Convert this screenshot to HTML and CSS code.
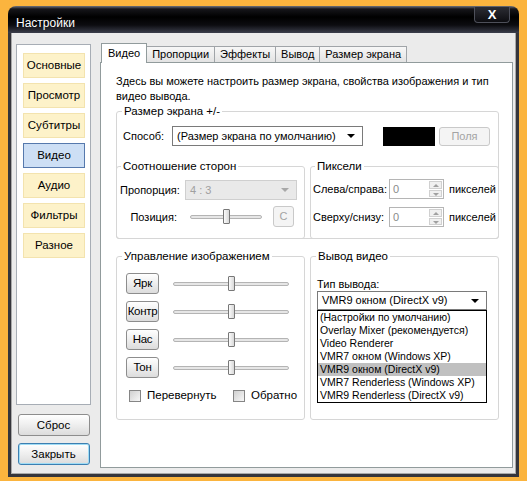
FILE: index.html
```html
<!doctype html>
<html lang="ru">
<head>
    <meta charset="UTF-8">
    <title>Настройки</title>
    <link rel="stylesheet" href="styles.css">
</head>
<body>
<div class="window">
    <div class="titlebar">
        <span class="title">Настройки</span>
        <div class="close">X</div>
    </div>
    <div class="client">
        <!-- левая колонка со страницами -->
        <div class="side">
            <div class="pages">
                <div class="page">Основные</div>
                <div class="page">Просмотр</div>
                <div class="page">Субтитры</div>
                <div class="page cur">Видео</div>
                <div class="page">Аудио</div>
                <div class="page">Фильтры</div>
                <div class="page">Разное</div>
            </div>
            <div class="btn side_btn">Сброс</div>
            <div class="btn side_btn focus">Закрыть</div>
        </div>

        <!-- вкладки -->
        <div class="tabs">
            <ul class="tab_head">
                <li class="cur">Видео</li>
                <li>Пропорции</li>
                <li>Эффекты</li>
                <li>Вывод</li>
                <li>Размер экрана</li>
            </ul>
            <div class="tab_body">
                <p class="intro">Здесь вы можете настроить размер экрана, свойства изображения и тип видео вывода.</p>

                <fieldset class="group">
                    <legend>Размер экрана +/-</legend>
                    <div class="row size_row">
                        <span class="lbl size_lbl">Способ:</span>
                        <div class="select size_sel">(Размер экрана по умолчанию)<i class="arrow"></i></div>
                        <div class="color_box"></div>
                        <div class="btn off fields_btn">Поля</div>
                    </div>
                    <div class="sub_row">
                        <fieldset class="group sub">
                            <legend>Соотношение сторон</legend>
                            <div class="row ratio_row">
                                <span class="lbl ratio_lbl">Пропорция:</span>
                                <div class="select off ratio_sel">4 : 3<i class="arrow"></i></div>
                            </div>
                            <div class="row pos_row">
                                <span class="lbl pos_lbl">Позиция:</span>
                                <div class="slider short">
                                    <div class="track"></div>
                                    <b class="thumb" style="left:33px"></b>
                                </div>
                                <div class="btn off c_btn">C</div>
                            </div>
                        </fieldset>
                        <fieldset class="group sub">
                            <legend>Пиксели</legend>
                            <div class="row pix_row first">
                                <span class="lbl pix_lbl">Слева/справа:</span>
                                <div class="spin"><span>0</span><div class="spin_btns"><i class="up"></i><i class="down"></i></div></div>
                                <span class="unit">пикселей</span>
                            </div>
                            <div class="row pix_row">
                                <span class="lbl pix_lbl">Сверху/снизу:</span>
                                <div class="spin"><span>0</span><div class="spin_btns"><i class="up"></i><i class="down"></i></div></div>
                                <span class="unit">пикселей</span>
                            </div>
                        </fieldset>
                    </div>
                </fieldset>

                <div class="low_row">
                    <fieldset class="group image_group">
                        <legend>Управление изображением</legend>
                        <div class="adjust">
                            <div class="row">
                                <div class="btn adj_btn">Ярк</div>
                                <div class="slider long"><div class="track"></div><b class="thumb" style="left:55px"></b></div>
                            </div>
                            <div class="row">
                                <div class="btn adj_btn">Контр</div>
                                <div class="slider long"><div class="track"></div><b class="thumb" style="left:55px"></b></div>
                            </div>
                            <div class="row">
                                <div class="btn adj_btn">Нас</div>
                                <div class="slider long"><div class="track"></div><b class="thumb" style="left:55px"></b></div>
                            </div>
                            <div class="row">
                                <div class="btn adj_btn">Тон</div>
                                <div class="slider long"><div class="track"></div><b class="thumb" style="left:55px"></b></div>
                            </div>
                        </div>
                        <div class="checks">
                            <label class="check flip"><i class="box"></i>Перевернуть</label>
                            <label class="check"><i class="box"></i>Обратно</label>
                        </div>
                    </fieldset>

                    <fieldset class="group out_group">
                        <legend>Вывод видео</legend>
                        <div class="out_box">
                            <div class="out_lbl">Тип вывода:</div>
                            <div class="select out_sel">VMR9 окном (DirectX v9)<i class="arrow"></i></div>
                            <ul class="drop">
                                <li>(Настройки по умолчанию)</li>
                                <li>Overlay Mixer (рекомендуется)</li>
                                <li>Video Renderer</li>
                                <li>VMR7 окном (Windows XP)</li>
                                <li class="cur">VMR9 окном (DirectX v9)</li>
                                <li>VMR7 Renderless (Windows XP)</li>
                                <li>VMR9 Renderless (DirectX v9)</li>
                            </ul>
                        </div>
                    </fieldset>
                </div>
            </div>
        </div>
    </div>
</div>
</body>
</html>
```

FILE: styles.css
```css
* {
    margin: 0;
    padding: 0;
    box-sizing: border-box;
}

body {
    background: #fbb43e;
    font-family: "Liberation Sans", Arial, sans-serif;
    font-size: 11px;
    color: #000;
}

.window {
    width: 511px;
    height: 471px;
    margin: 6px 0 0 8px;
    display: flex;
    flex-direction: column;
}

/* заголовок окна */
.titlebar {
    height: 27px;
    display: flex;
    justify-content: space-between;
    align-items: flex-start;
    padding: 0 9px 0 8px;
    border-radius: 8px 8px 0 0;
    background: linear-gradient(#70737c 0, #16161a 3px, #000 11px, #0c0c10 19px, #3b3e4b 27px);
}

.titlebar .title {
    color: #fff;
    font-size: 12px;
    padding-top: 10px;
}

.close {
    width: 36px;
    height: 16px;
    margin-top: 1px;
    border: 1px solid #4e505a;
    border-top: none;
    border-radius: 0 0 4px 4px;
    background: linear-gradient(#2c2d34, #0d0d11);
    color: #fff;
    font-weight: bold;
    font-size: 13px;
    line-height: 15px;
    text-align: center;
}

.client {
    flex: 1;
    display: flex;
    gap: 9px;
    padding: 9px 3px 6px 5px;
    background: #ebebeb;
    border: 3px solid #35353b;
    border-top: none;
    box-shadow: inset 1px 0 0 #a9a9a9, inset -1px -1px 0 #a9a9a9;
}

/* левая колонка */
.side {
    width: 75px;
    display: flex;
    flex-direction: column;
    align-items: center;
}

.pages {
    width: 75px;
    height: 361px;
    margin-top: 2px;
    padding: 8px 0 0 6px;
    background: #fff;
    border: 1px solid #a7adb5;
    display: flex;
    flex-direction: column;
    gap: 5px;
}

.page {
    width: 62px;
    height: 25px;
    line-height: 23px;
    text-align: center;
    background: #fdf2c9;
    border: 1px solid #f3e3ae;
    font-size: 11.5px;
}

.page.cur {
    background: #cddff5;
    border-color: #5679ad;
}

.btn {
    border: 1px solid #8d8d8d;
    border-radius: 3px;
    background: linear-gradient(#ffffff, #f0f0f0 45%, #dcdcdc);
    text-align: center;
}

.side_btn {
    width: 72px;
    height: 22px;
    line-height: 20px;
    margin-top: 9px;
    font-size: 11.5px;
}

.side_btn.focus {
    margin-top: 7px;
    border-color: #3c7fb1;
    box-shadow: inset 0 0 0 1px #9fdcf5;
}

.btn.off {
    color: #a3a3a3;
    border-color: #c9c9c9;
    background: #f4f4f4;
}

/* вкладки */
.tabs {
    width: 413px;
    display: flex;
    flex-direction: column;
}

.tab_head {
    list-style: none;
    display: flex;
    align-items: flex-end;
    height: 20px;
    padding-left: 1px;
}

.tab_head li {
    height: 16px;
    line-height: 15px;
    padding: 0 5px;
    margin-right: -1px;
    border: 1px solid #a0a4a8;
    border-bottom: none;
    background: linear-gradient(#f7f7f7, #e3e3e3);
    font-size: 11px;
}

.tab_head li.cur {
    position: relative;
    z-index: 1;
    height: 20px;
    margin-bottom: -1px;
    padding: 2px 6px 0;
    background: #fff;
    border-color: #919b9c;
}

.tab_body {
    flex: 1;
    background: #fff;
    border: 1px solid #919b9c;
    padding: 11px 13px 0 15px;
}

.intro {
    line-height: 15px;
}

/* группы */
.group {
    border: 1px solid #d6d6d6;
    border-radius: 3px;
    padding: 0;
    min-width: 0;
}

.group legend {
    margin-left: 5px;
    padding: 0 2px;
    line-height: 14px;
    font-size: 11.5px;
}

.group.sub legend {
    margin-left: 4px;
}

.row {
    display: flex;
    align-items: center;
    white-space: nowrap;
}

.lbl {
    flex: none;
}

.select {
    position: relative;
    height: 20px;
    line-height: 18px;
    padding-left: 4px;
    border: 1px solid #7a7a7a;
    background: #fff;
    white-space: nowrap;
}

.select .arrow {
    position: absolute;
    right: 7px;
    top: 7px;
    border-left: 4px solid transparent;
    border-right: 4px solid transparent;
    border-top: 4px solid #000;
}

.select.off {
    color: #a0a0a0;
    border-color: #cfcfcf;
    background: #e9e9e9;
}

.select.off .arrow {
    border-top-color: #a8a8a8;
}

.size_row {
    margin-top: 8px;
    padding-left: 6px;
}

.size_lbl {
    width: 49px;
}

.size_sel {
    width: 191px;
}

.color_box {
    width: 52px;
    height: 19px;
    margin-left: 20px;
    background: #000;
}

.fields_btn {
    width: 51px;
    height: 19px;
    line-height: 17px;
    margin-left: 4px;
}

.sub_row {
    display: flex;
    gap: 5px;
    margin: 13px -1px -1px;
}

.sub_row .sub {
    flex: 1 1 0;
    height: 80px;
}

.ratio_row {
    margin-top: 7px;
    padding-left: 3px;
}

.ratio_lbl {
    width: 65px;
}

.ratio_sel {
    width: 112px;
}

.pos_row {
    margin-top: 6px;
    padding-left: 3px;
}

.pos_lbl {
    width: 57px;
    text-align: right;
    margin-right: 13px;
}

.c_btn {
    width: 21px;
    height: 21px;
    line-height: 19px;
    margin-left: 11px;
}

/* ползунки */
.slider {
    position: relative;
    height: 21px;
    flex: none;
}

.slider.short {
    width: 72px;
}

.slider.long {
    width: 116px;
    margin-left: 14px;
}

.slider .track {
    position: absolute;
    left: 0;
    right: 0;
    top: 9px;
    height: 4px;
    border: 1px solid #b4b4b4;
    border-radius: 2px;
    background: #e6e6e6;
}

.slider .thumb {
    position: absolute;
    top: 3px;
    width: 7px;
    height: 15px;
    border: 1px solid #777;
    border-radius: 1px;
    background: linear-gradient(90deg, #fbfbfb, #d8d8d8);
}

/* пиксели */
.pix_row {
    margin-top: 8px;
    padding-left: 2px;
}

.pix_row.first {
    margin-top: 6px;
}

.pix_lbl {
    width: 76px;
}

.spin {
    width: 55px;
    height: 20px;
    flex: none;
    border: 1px solid #b5b5b5;
    display: flex;
    justify-content: space-between;
    padding-left: 3px;
    line-height: 18px;
    color: #8a8a8a;
}

.spin_btns {
    width: 15px;
    display: flex;
    flex-direction: column;
    gap: 1px;
    padding: 1px;
}

.spin_btns i {
    flex: 1;
    position: relative;
    border: 1px solid #d0d0d0;
    background: #f0f0f0;
}

.spin_btns i::after {
    content: "";
    position: absolute;
    left: 3px;
    top: 2px;
    border-left: 3px solid transparent;
    border-right: 3px solid transparent;
}

.spin_btns .up::after {
    border-bottom: 3px solid #a0a0a0;
}

.spin_btns .down::after {
    border-top: 3px solid #a0a0a0;
}

.unit {
    margin-left: 5px;
}

/* нижние группы */
.low_row {
    display: flex;
    gap: 5px;
    margin-top: 10px;
}

.low_row .group {
    flex: 1 1 0;
}

.adjust {
    display: flex;
    flex-direction: column;
    gap: 7px;
    margin-top: 10px;
    padding-left: 9px;
}

.adj_btn {
    width: 33px;
    height: 21px;
    line-height: 19px;
    font-size: 11.5px;
    letter-spacing: -0.3px;
    flex: none;
}

.checks {
    display: flex;
    margin: 11px 0 17px;
    padding-left: 12px;
}

.check {
    display: flex;
    align-items: center;
    gap: 6px;
    line-height: 13px;
    font-size: 11.5px;
}

.check.flip {
    width: 104px;
}

.check .box {
    width: 12px;
    height: 12px;
    border: 1px solid #858585;
    background: linear-gradient(135deg, #d0d0d0, #f7f7f7);
}

.out_box {
    padding-left: 6px;
}

.out_lbl {
    margin-top: 14px;
    line-height: 14px;
}

.out_sel {
    width: 170px;
    height: 19px;
    line-height: 17px;
}

.drop {
    list-style: none;
    width: 170px;
    border: 1px solid #000;
    background: #fff;
    font-size: 10.5px;
}

.drop li {
    height: 13px;
    line-height: 13px;
    padding-left: 2px;
    white-space: nowrap;
}

.drop li.cur {
    background: #c0c0c0;
}
```
